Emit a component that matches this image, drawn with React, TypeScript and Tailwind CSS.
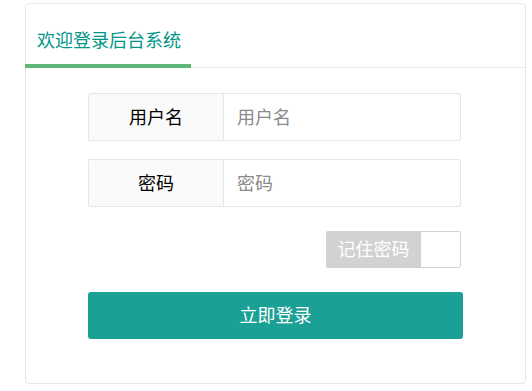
export default function App() {
  const font = { fontFamily: '"Noto Sans CJK SC", "Liberation Sans", sans-serif' };

  return (
    <div className="w-[532px] h-[391px] bg-white" style={font}>
      <div className="ml-[25px] pt-[3px]">
        <div className="w-[501px] h-[381px] border border-[#e6e6e6] rounded-[4px] bg-white">
          {/* tab header */}
          <div className="relative h-[64px] border-b border-[#e6e6e6]">
            <div className="relative w-[165px] h-full pl-[11px] pt-[23px]">
              <span className="text-[18px] leading-[24px] text-[#009688]">欢迎登录后台系统</span>
              <div className="absolute left-[-1px] right-0 bottom-[-1px] h-[4px] bg-[#5fb878]" />
            </div>
          </div>

          {/* form */}
          <div className="ml-[62px] mt-[25px] w-[375px]">
            <div className="flex h-[48px] w-[373px] border border-[#e6e6e6] rounded-[2px] mb-[18px]">
              <div className="w-[135px] shrink-0 flex items-center justify-center pb-[2px] bg-[#fafafa] border-r border-[#e6e6e6] text-[18px] text-black">
                用户名
              </div>
              <input
                placeholder="用户名"
                className="flex-1 min-w-0 pl-[13px] pb-[2px] text-[18px] outline-none placeholder:text-[#8a8a8a]"
              />
            </div>

            <div className="flex h-[48px] w-[373px] border border-[#e6e6e6] rounded-[2px]">
              <div className="w-[135px] shrink-0 flex items-center justify-center pb-[2px] bg-[#fafafa] border-r border-[#e6e6e6] text-[18px] text-black">
                密码
              </div>
              <input
                type="password"
                placeholder="密码"
                className="flex-1 min-w-0 pl-[13px] pb-[2px] text-[18px] outline-none placeholder:text-[#8a8a8a]"
              />
            </div>

            <div className="flex justify-end w-[373px] mt-[24px]">
              <div className="flex h-[37px] w-[135px] rounded-[2px] overflow-hidden">
                <div className="w-[95px] bg-[#d2d2d2] flex items-center justify-center pb-[2px] text-[18px] text-white">
                  记住密码
                </div>
                <div className="flex-1 bg-white border border-l-0 border-[#d2d2d2] rounded-r-[2px]" />
              </div>
            </div>

            <button className="mt-[24px] w-[375px] h-[47px] pb-[2px] rounded-[3px] bg-[#1aa094] text-white text-[18px]">
              立即登录
            </button>
          </div>
        </div>
      </div>
    </div>
  );
}
